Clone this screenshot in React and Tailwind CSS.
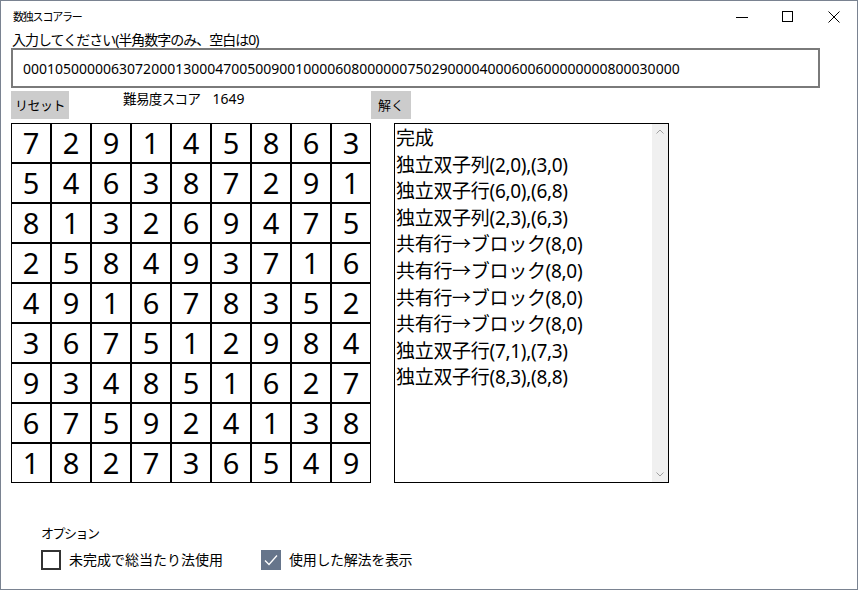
import React from "react";

const grid = [
  [7, 2, 9, 1, 4, 5, 8, 6, 3],
  [5, 4, 6, 3, 8, 7, 2, 9, 1],
  [8, 1, 3, 2, 6, 9, 4, 7, 5],
  [2, 5, 8, 4, 9, 3, 7, 1, 6],
  [4, 9, 1, 6, 7, 8, 3, 5, 2],
  [3, 6, 7, 5, 1, 2, 9, 8, 4],
  [9, 3, 4, 8, 5, 1, 6, 2, 7],
  [6, 7, 5, 9, 2, 4, 1, 3, 8],
  [1, 8, 2, 7, 3, 6, 5, 4, 9],
];

const lines = [
  "完成",
  "独立双子列(2,0),(3,0)",
  "独立双子行(6,0),(6,8)",
  "独立双子列(2,3),(6,3)",
  "共有行→ブロック(8,0)",
  "共有行→ブロック(8,0)",
  "共有行→ブロック(8,0)",
  "共有行→ブロック(8,0)",
  "独立双子行(7,1),(7,3)",
  "独立双子行(8,3),(8,8)",
];

const font = { fontFamily: '"Noto Sans", "Noto Sans CJK JP", sans-serif' };

export default function App() {
  return (
    <div
      className="w-[858px] h-[590px] border border-[#7a8391] bg-white text-black flex flex-col overflow-hidden"
      style={font}
    >
      {/* title bar */}
      <div className="h-[31px] flex items-center shrink-0">
        <div className="pl-[12px] text-[11px] tracking-[-1.2px] flex-1 leading-none">数独スコアラー</div>
        <div className="flex h-full">
          <div className="w-[46px] h-full flex items-center justify-center">
            <svg width="12" height="12" viewBox="0 0 12 12">
              <line x1="0" y1="6.5" x2="12" y2="6.5" stroke="#000" strokeWidth="1" />
            </svg>
          </div>
          <div className="w-[46px] h-full flex items-center justify-center">
            <svg width="12" height="12" viewBox="0 0 12 12">
              <rect x="0.5" y="0.5" width="10" height="10" fill="none" stroke="#000" strokeWidth="1" />
            </svg>
          </div>
          <div className="w-[46px] h-full flex items-center justify-center">
            <svg width="12" height="12" viewBox="0 0 12 12">
              <path d="M0.5 0.5 L11.5 11.5 M11.5 0.5 L0.5 11.5" stroke="#000" strokeWidth="1" />
            </svg>
          </div>
        </div>
      </div>

      {/* label */}
      <div className="pl-[11px] text-[14px] tracking-[-1px] leading-[16px] h-[16px]">
        入力してください(半角数字のみ、空白は0)
      </div>

      {/* input */}
      <div className="ml-[10px] w-[809px] h-[40px] border-2 border-[#7a7a7a] flex items-center pl-[10px] text-[14px]">
        0001050000063072000130004700500900100006080000007502900004000600600000000800030000
      </div>

      {/* button row */}
      <div className="mt-[3px] h-[28px] flex ml-[10px]">
        <div className="w-[360px] flex">
          <div className="w-[58px] h-[28px] bg-[#cccccc] flex items-center justify-center text-[13px] tracking-[-0.5px] pt-[2px]">
            リセット
          </div>
          <div className="ml-[54px] flex leading-[16px]">
            <span className="text-[13.5px] tracking-[-0.6px]">難易度スコア</span>
            <span className="ml-[12px] text-[14px]">1649</span>
          </div>
        </div>
        <div className="w-[40px] h-[28px] bg-[#cccccc] flex items-center justify-center text-[13px] pt-[2px]">
          解く
        </div>
      </div>

      {/* main area */}
      <div className="mt-[4px] flex ml-[10px]">
        <div className="grid grid-cols-[repeat(9,40px)] w-[360px] h-[360px]">
          {grid.flat().map((n, i) => (
            <div
              key={i}
              className="w-[40px] h-[40px] border border-black flex items-center justify-center text-[29px] leading-none pb-[2px]"
            >
              {n}
            </div>
          ))}
        </div>
        <div className="ml-[23px] w-[275px] h-[360px] border border-black flex">
          <div className="flex-1 pl-[1px] pt-[1px] text-[19px] tracking-[-0.3px] leading-[26.6px]">
            {lines.map((l, i) => (
              <div key={i}>{l}</div>
            ))}
          </div>
          <div className="w-[16px] bg-[#f0f0f0] flex flex-col justify-between items-center py-[5px]">
            <svg width="8" height="5" viewBox="0 0 8 5">
              <path d="M0.5 4.5 L4 1 L7.5 4.5" fill="none" stroke="#a0a0a0" strokeWidth="1" />
            </svg>
            <svg width="8" height="5" viewBox="0 0 8 5">
              <path d="M0.5 0.5 L4 4 L7.5 0.5" fill="none" stroke="#a0a0a0" strokeWidth="1" />
            </svg>
          </div>
        </div>
      </div>

      {/* options */}
      <div className="mt-[42px] ml-[40px] text-[13px] tracking-[-1.5px] leading-[16px]">オプション</div>
      <div className="mt-[9px] ml-[40px] flex items-center h-[20px]">
        <div className="w-[20px] h-[20px] border-2 border-[#333333]" />
        <div className="ml-[8px] w-[192px] text-[14px] leading-none">未完成で総当たり法使用</div>
        <div className="w-[20px] h-[20px] bg-[#66758b] flex items-center justify-center">
          <svg width="16" height="16" viewBox="0 0 16 16">
            <path d="M2 8.5 L6 12.5 L14 3.5" fill="none" stroke="#ffffff" strokeWidth="1.3" />
          </svg>
        </div>
        <div className="ml-[8px] text-[14px] tracking-[-0.3px] leading-none">使用した解法を表示</div>
      </div>
    </div>
  );
}
